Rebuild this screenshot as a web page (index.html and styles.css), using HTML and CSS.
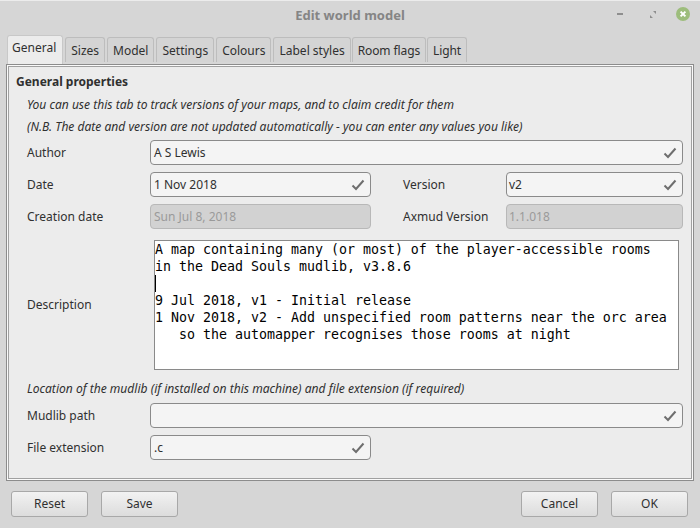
FILE: index.html
```html
<!DOCTYPE html>
<html lang="en">
<head>
  <meta charset="UTF-8" />
  <title>Edit world model</title>
  <link rel="stylesheet" href="styles.css">
</head>
<body>
  <div class="window">
    <div class="titlebar">
      <span class="title">Edit world model</span>
      <div class="controls">
        <svg class="ctl" width="14" height="14" viewBox="0 0 14 14"><rect x="1" y="6" width="6" height="2" fill="#8e8e8e"/></svg>
        <svg class="ctl" width="14" height="14" viewBox="0 0 14 14"><path d="M7 4h3v3zM4 11V8l3 3z" fill="#8e8e8e"/></svg>
        <svg class="ctl" width="14" height="14" viewBox="0 0 14 14"><circle cx="7" cy="7" r="7" fill="#9dbd7c"/><path d="M4.6 4.6l4.8 4.8M9.4 4.6l-4.8 4.8" stroke="#fff" stroke-width="2"/></svg>
      </div>
    </div>

    <div class="tabs">
      <div class="tab active">General</div>
      <div class="tab">Sizes</div>
      <div class="tab">Model</div>
      <div class="tab">Settings</div>
      <div class="tab">Colours</div>
      <div class="tab">Label styles</div>
      <div class="tab">Room flags</div>
      <div class="tab">Light</div>
    </div>

    <div class="frame">
      <div class="panel">
        <h2>General properties</h2>
        <p class="note">You can use this tab to track versions of your maps, and to claim credit for them</p>
        <p class="note">(N.B. The date and version are not updated automatically - you can enter any values you like)</p>

        <div class="row">
          <label>Author</label>
          <div class="entry wide">A S Lewis<svg class="tick" width="14" height="12" viewBox="0 0 14 12"><path d="M1.5 6.5l3.5 3.5 7.5-8.5" fill="none" stroke="#6e6e6e" stroke-width="2"/></svg></div>
        </div>
        <div class="row">
          <label>Date</label>
          <div class="entry mid">1 Nov 2018<svg class="tick" width="14" height="12" viewBox="0 0 14 12"><path d="M1.5 6.5l3.5 3.5 7.5-8.5" fill="none" stroke="#6e6e6e" stroke-width="2"/></svg></div>
          <label class="side">Version</label>
          <div class="entry small">v2<svg class="tick" width="14" height="12" viewBox="0 0 14 12"><path d="M1.5 6.5l3.5 3.5 7.5-8.5" fill="none" stroke="#6e6e6e" stroke-width="2"/></svg></div>
        </div>
        <div class="row">
          <label>Creation date</label>
          <div class="entry mid off">Sun Jul 8, 2018</div>
          <label class="side">Axmud Version</label>
          <div class="entry small off">1.1.018</div>
        </div>

        <div class="desc-row">
          <label>Description</label>
          <div class="textview">
            <div>A map containing many (or most) of the player-accessible rooms</div>
            <div>in the Dead Souls mudlib, v3.8.6</div>
            <div><span class="caret"></span></div>
            <div>9 Jul 2018, v1 - Initial release</div>
            <div>1 Nov 2018, v2 - Add unspecified room patterns near the orc area</div>
            <div>   so the automapper recognises those rooms at night</div>
          </div>
        </div>

        <p class="note loc">Location of the mudlib (if installed on this machine) and file extension (if required)</p>
        <div class="row">
          <label>Mudlib path</label>
          <div class="entry wide"><svg class="tick" width="14" height="12" viewBox="0 0 14 12"><path d="M1.5 6.5l3.5 3.5 7.5-8.5" fill="none" stroke="#6e6e6e" stroke-width="2"/></svg></div>
        </div>
        <div class="row">
          <label>File extension</label>
          <div class="entry mid">.c<svg class="tick" width="14" height="12" viewBox="0 0 14 12"><path d="M1.5 6.5l3.5 3.5 7.5-8.5" fill="none" stroke="#6e6e6e" stroke-width="2"/></svg></div>
        </div>
      </div>
    </div>

    <div class="buttons">
      <button>Reset</button>
      <button>Save</button>
      <span class="spacer"></span>
      <button>Cancel</button>
      <button>OK</button>
    </div>
  </div>
</body>
</html>
```

FILE: styles.css
```css
html, body {
  margin: 0;
  height: 528px;
  overflow: hidden;
}
body {
  font-family: "Noto Sans", sans-serif;
  font-size: 12px;
  color: #303030;
  background: #d6d6d6;
}
.window {
  width: 700px;
  height: 528px;
  display: flex;
  flex-direction: column;
  border-top: 1px solid #ececec;
  box-sizing: border-box;
}
.titlebar {
  height: 27px;
  display: flex;
  align-items: center;
  justify-content: center;
  flex: none;
}
.title {
  font-weight: 700;
  font-size: 13px;
  color: #858585;
}
.controls {
  position: absolute;
  top: 7px;
  right: 10px;
  display: flex;
  gap: 16px;
}
.tabs {
  display: flex;
  height: 26px;
  margin: 8px 0 0 7px;
  flex: none;
  align-items: flex-end;
  gap: 2px;
}
.tab {
  height: 25px;
  box-sizing: border-box;
  padding: 0 5px;
  line-height: 25px;
  border: 1px solid #bdbdbd;
  border-bottom: none;
  border-radius: 3px 3px 0 0;
  background: #d4d4d4;
}
.tab:nth-child(n+7) {
  margin-left: -1px;
  letter-spacing: -0.1px;
}
.tab.active {
  height: 29px;
  line-height: 23px;
  padding: 0 6px 0 4px;
  margin-bottom: -2px;
  background: #ececec;
  border-color: #c8c8c8;
  position: relative;
  z-index: 1;
}
.frame {
  margin: 2px 6px 0;
  height: 417px;
  box-sizing: border-box;
  border: 1px solid #8c8c8c;
  padding: 1px;
  background: #fafafa;
  flex: none;
}
.panel {
  height: 100%;
  box-sizing: border-box;
  border: 1px solid #a0a0a0;
  background: #ececec;
  padding: 6px 7px 0 18px;
}
h2 {
  margin: 0 0 6px -11px;
  font-size: 12px;
  line-height: 17px;
  font-weight: 700;
}
.note {
  margin: 5px 0 0;
  font-size: 12.07px;
  font-style: italic;
  line-height: 17px;
}
.row {
  display: flex;
  align-items: center;
  height: 25px;
  margin-top: 7px;
}
.note + .row {
  margin-top: 5px;
}
.note.loc + .row {
  margin-top: 6px;
}
label {
  width: 123px;
  flex: none;
}
label.side {
  width: 103px;
  margin-left: 32px;
}
.desc-row label {
  margin-bottom: 2px;
}
.entry {
  height: 25px;
  box-sizing: border-box;
  border: 1px solid #8a8a8a;
  border-radius: 4px;
  background: #f4f4f4;
  padding: 0 3px;
  line-height: 23px;
  display: flex;
  justify-content: space-between;
  align-items: center;
}
.entry.wide {
  width: 533px;
}
.entry.mid {
  width: 221px;
}
.entry.small {
  width: 177px;
  padding-left: 2px;
}
.entry.off {
  background: #d2d2d2;
  border-color: #b8b8b8;
  color: #9a9a9a;
}
.tick {
  margin-left: auto;
  margin-right: 2px;
}
.desc-row {
  display: flex;
  align-items: center;
  margin-top: 11px;
}
.textview {
  width: 525px;
  height: 130px;
  box-sizing: border-box;
  margin-left: 4px;
  border: 1px solid #8a8a8a;
  background: #fff;
  color: #000;
  font-family: "DejaVu Sans Mono", monospace;
  font-size: 13.29px;
  line-height: 18px;
}
.textview div {
  height: 17px;
  white-space: pre;
}
.caret {
  display: inline-block;
  width: 1px;
  height: 17px;
  background: #000;
  vertical-align: top;
}
.note.loc {
  margin-top: 10px;
}
.buttons {
  display: flex;
  gap: 13px;
  margin: 10px 12px 0 11px;
}
.spacer {
  flex: 1;
}
.buttons button {
  width: 77px;
  height: 26px;
  font: inherit;
  color: #303030;
  border: 1px solid #a8a8a8;
  border-radius: 3px;
  background: linear-gradient(#f2f2f2, #dcdcdc);
  padding: 0 0 2px;
}
```
